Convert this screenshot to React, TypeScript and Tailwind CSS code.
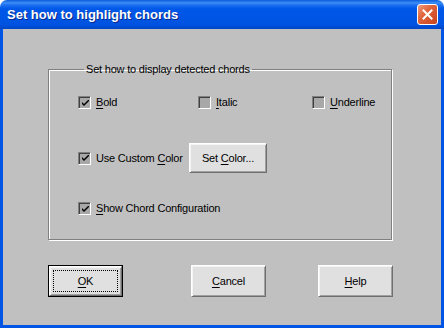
import type { ReactNode } from 'react';

const font = { fontFamily: '"Liberation Sans", Arial, sans-serif' };

// 3D classic push button
const Btn = ({ children, isDefault = false, className = '' }: { children: ReactNode; isDefault?: boolean; className?: string }) => (
  <div className={`${isDefault ? 'border border-black' : ''} ${className}`}>
    <div className="w-full h-full border border-t-white border-l-white border-b-[#6f6f6f] border-r-[#6f6f6f] shadow-[inset_1px_1px_0_#f4f4f4,inset_-1px_-1px_0_#a0a0a0] bg-[#e0e0e0] flex items-center justify-center p-[3px]">
      <div className={`w-full h-full flex items-center justify-center ${isDefault ? 'border border-dotted border-black' : ''}`}>
        <span className="text-[11px] tracking-[-0.2px] text-black leading-none">{children}</span>
      </div>
    </div>
  </div>
);

const CheckBox = ({ checked, label }: { checked: boolean; label: ReactNode }) => (
  <div className="flex items-center gap-[5px]">
    <div className="w-[13px] h-[13px] border border-t-[#808080] border-l-[#808080] border-b-white border-r-white shadow-[inset_1px_1px_0_#404040] bg-[#a8a8a8] flex items-center justify-center">
      {checked && (
        <svg width="7" height="7" viewBox="0 0 7 7" className="ml-[1px] mt-[1px]">
          <path d="M0 2 L0 4 L2 6 L7 1 L7 -1 L2 4 Z" fill="#000" />
        </svg>
      )}
    </div>
    <span className="text-[11px] tracking-[-0.2px] text-black leading-none">{label}</span>
  </div>
);

const U = ({ children }: { children: ReactNode }) => <span className="underline underline-offset-[2px]">{children}</span>;

const App = () => {
  return (
    <div className="w-[444px] h-[328px] bg-white flex flex-col" style={font}>
      {/* title bar */}
      <div className="h-[29px] rounded-t-[7px] bg-[linear-gradient(to_bottom,#0a5cdb_0%,#3d8ef5_10%,#1a6ef0_18%,#0058e8_30%,#0055e5_60%,#0053e0_85%,#0046c7_100%)] flex items-center pl-[7px] pr-[6px]">
        <span className="text-white font-bold text-[13px] [text-shadow:1px_1px_0_#0a2a8a] flex-1">
          Set how to highlight chords
        </span>
        <div className="w-[21px] h-[21px] rounded-[3px] border border-white bg-[linear-gradient(135deg,#f09a7a_0%,#e0643c_40%,#c8411c_100%)] flex items-center justify-center">
          <svg width="11" height="11" viewBox="0 0 11 11">
            <path d="M1.5 1.5 L9.5 9.5 M9.5 1.5 L1.5 9.5" stroke="#fff" strokeWidth="2" strokeLinecap="square" />
          </svg>
        </div>
      </div>

      {/* body */}
      <div className="flex-1 bg-[#c0c0c0] border-x-[3px] border-b-[3px] border-[#0055e5] flex flex-col pl-[45px]">
        <fieldset className="mt-[34px] w-[344px] h-[177px] border border-[#808080] shadow-[inset_1px_1px_0_#fff,1px_1px_0_#fff] pl-[29px]">
          <legend className="ml-[6px] px-[2px] text-[11px] tracking-[-0.2px] text-black leading-[13px]">
            Set how to display detected chords
          </legend>
          <div className="flex flex-col">
            <div className="flex items-center h-[13px] mt-[20px]">
              <div className="w-[120px]"><CheckBox checked label={<><U>B</U>old</>} /></div>
              <div className="w-[114px]"><CheckBox checked={false} label={<><U>I</U>talic</>} /></div>
              <CheckBox checked={false} label={<><U>U</U>nderline</>} />
            </div>
            <div className="flex items-center h-[30px] mt-[34px]">
              <div className="w-[111px]"><CheckBox checked label={<>Use Custom <U>C</U>olor</>} /></div>
              <Btn className="w-[78px] h-[30px]">Set <U>C</U>olor...</Btn>
            </div>
            <div className="flex items-center h-[13px] mt-[29px]">
              <CheckBox checked label={<><U>S</U>how Chord Configuration</>} />
            </div>
          </div>
        </fieldset>

        <div className="flex mt-[25px]">
          <Btn isDefault className="w-[75px] h-[32px]"><U>O</U>K</Btn>
          <Btn className="w-[75px] h-[32px] ml-[68px]"><U>C</U>ancel</Btn>
          <Btn className="w-[75px] h-[32px] ml-[52px]"><U>H</U>elp</Btn>
        </div>
      </div>
    </div>
  );
};

export default App;
